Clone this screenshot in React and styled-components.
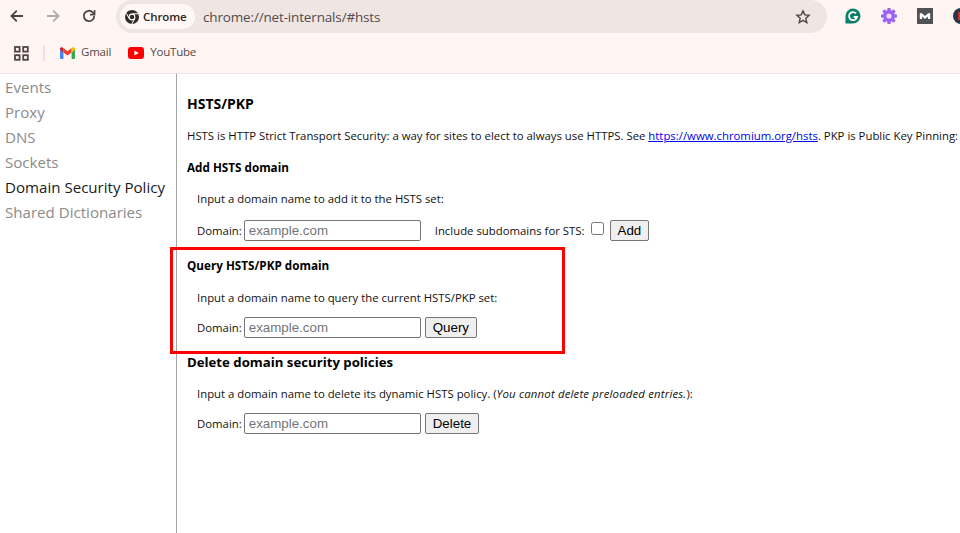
import React from "react";
import styled, { createGlobalStyle } from "styled-components";

const Global = createGlobalStyle`
  html, body { margin: 0; padding: 0; width: 960px; height: 533px; overflow: hidden; background: #fff; }
  #root { width: 960px; height: 533px; overflow: hidden; }
`;
const UI = `"Open Sans", "Noto Sans", sans-serif`;
const Page = styled.div`display:flex;flex-direction:column;width:960px;height:533px;position:relative;overflow:hidden;font-family:${UI};`;
const Chrome = styled.header`height:73px;background:#fff5f3;border-bottom:1px solid #ebe3e1;display:flex;flex-direction:column;flex:none;`;
const Toolbar = styled.div`height:33px;box-sizing:border-box;padding-bottom:1px;display:flex;align-items:center;`;
const NavBtn = styled.div`width:36px;display:flex;justify-content:center;align-items:center;color:${p=>p.$off?"#b3aaa8":"#51443f"};`;
const NavGroup = styled.div`display:flex;margin-left:-1px;width:117px;flex:none;`;
const Omni = styled.div`width:711px;height:33px;flex:none;align-self:flex-start;background:#efe6e4;border-radius:17px;display:flex;align-items:center;padding:0 4px;box-sizing:border-box;`;
const Chip = styled.div`height:25px;width:75px;flex:none;background:#fff8f6;border-radius:13px;display:flex;align-items:center;gap:4px;padding-left:5px;box-sizing:border-box;font-size:11.5px;font-weight:600;color:#2b2523;letter-spacing:-.1px;`;
const Url = styled.span`margin-left:8px;font-size:13.5px;color:#55494a;letter-spacing:-.16px;flex:1;`;
const Star = styled.div`margin-right:12px;display:flex;color:#51443f;`;
const Exts = styled.div`display:flex;align-items:center;flex:1;padding-left:18px;gap:20px;`;
const Ext = styled.div`width:16px;height:16px;flex:none;display:flex;`;
const Bookmarks = styled.div`flex:1;display:flex;align-items:center;padding-left:14px;font-size:11.5px;color:#544947;`;
const Sep = styled.div`width:2px;height:16px;background:#fbdcd8;margin:0 15px 0 14px;`;
const Mark = styled.div`display:flex;align-items:center;gap:6px;margin-right:17px;letter-spacing:-.2px;line-height:14px;`;
const MarkText = styled.span`margin-top:-2px;`;
const Body = styled.div`flex:1;display:flex;min-height:0;`;
const Side = styled.nav`flex:none;border-right:1px solid #a6a6a6;padding:1px 0 0 5px;width:171px;`;
const SideItem = styled.div`height:25px;line-height:25px;font-size:15.1px;color:${p=>p.$on?"#1a1a1a":"#8b8b8b"};white-space:nowrap;`;
const Main = styled.main`flex:1;min-width:0;padding:21px 0 0 10px;overflow:hidden;font-size:11.37px;color:#111;`;
const H1 = styled.h1`margin:0;font-size:14px;line-height:18px;font-weight:700;color:#000;`;
const H2 = styled.h2`margin:${p=>p.$top||"15px"} 0 0;font-size:${p=>p.$big?"13.2px":"11.7px"};line-height:16px;font-weight:700;color:#000;white-space:nowrap;`;
const Para = styled.p`margin:${p=>p.$top||"16px"} 0 0;line-height:16px;white-space:nowrap;`;
const Indent = styled.div`padding-left:10px;`;
const Row = styled.div`display:flex;align-items:center;margin-top:${p=>p.$mt||"10px"};height:22px;white-space:nowrap;`;
const Field = styled.input`width:177px;height:21px;box-sizing:border-box;border:1px solid #767676;border-radius:2px;margin-left:2px;padding:0 4px;font-family:"Liberation Sans",Arial,sans-serif;font-size:13.33px;color:#000;&::placeholder{color:#757575;opacity:1;}`;
const Btn = styled.button`height:21px;box-sizing:border-box;border:1px solid #767676;border-radius:2px;background:#efefef;margin-left:${p=>p.$ml||"4px"};padding:0 7px;font-family:"Liberation Sans",Arial,sans-serif;font-size:13.33px;color:#000;`;
const Label = styled.span`margin-left:14px;`;
const Check = styled.input.attrs({type:"checkbox"})`width:13px;height:13px;margin:0 0 3px 6px;`;
const Link = styled.a`color:#0000ee;text-decoration:underline;`;
const Note = styled.em`letter-spacing:.18px;`;
const Callout = styled.div`position:absolute;left:170px;top:247px;width:395px;height:107px;box-sizing:border-box;border:3px solid #fe0000;pointer-events:none;`;

const Back = ({flip}) => <svg width="16" height="16" viewBox="0 0 16 16" fill="none" stroke="currentColor" strokeWidth="1.8" style={flip?{transform:"scaleX(-1)"}:undefined}><path d="M14 8H2.5M7.8 2.6 2.4 8l5.4 5.4"/></svg>;

export default function App(){
  return <Page>
    <Global/>
    <Chrome>
      <Toolbar>
        <NavGroup>
          <NavBtn><Back/></NavBtn>
          <NavBtn $off><Back flip/></NavBtn>
          <NavBtn><svg width="16" height="16" viewBox="0 0 16 16" fill="none" stroke="currentColor" strokeWidth="1.8"><path d="M13.2 8a5.2 5.2 0 1 1-1.5-3.7L13.4 6"/><path d="M13.6 2v4.6H9" strokeWidth="1.6"/></svg></NavBtn>
        </NavGroup>
        <Omni>
          <Chip>
            <svg width="14" height="14" viewBox="0 0 14 14"><circle cx="7" cy="7" r="7" fill="#2f2b2a"/><circle cx="7" cy="7" r="3.4" fill="#fff"/><circle cx="7" cy="7" r="2.3" fill="#2f2b2a"/><path d="M7 3.8h6M4.2 8.6 1.4 3.4M9.8 8.6 6.8 14" stroke="#fff" strokeWidth="1"/></svg>
            Chrome
          </Chip>
          <Url>chrome://net-internals/#hsts</Url>
          <Star><svg width="16" height="16" viewBox="0 0 16 16" fill="none" stroke="currentColor" strokeWidth="1.4"><path d="M8 1.9l1.8 4 4.3.4-3.3 2.9 1 4.3L8 11.3l-3.8 2.2 1-4.3-3.3-2.9 4.3-.4z"/></svg></Star>
        </Omni>
        <Exts>
          <Ext><svg width="16" height="16" viewBox="0 0 16 16"><path d="M8 .5a7.5 7.5 0 0 1 0 15H.5V8A7.5 7.5 0 0 1 8 .5z" fill="#0c7f69"/><path d="M11 5.4A4 4 0 1 0 12 9H8.6" fill="none" stroke="#fff" strokeWidth="1.8"/></svg></Ext>
          <Ext><svg width="16" height="16" viewBox="0 0 16 16"><g fill="#9a63f2"><circle cx="8" cy="8" r="5.8"/><rect x="6.2" y="0" width="3.6" height="16" rx="1"/><rect x="0" y="6.2" width="16" height="3.6" rx="1"/><rect x="6.2" y="0" width="3.6" height="16" rx="1" transform="rotate(45 8 8)"/><rect x="6.2" y="0" width="3.6" height="16" rx="1" transform="rotate(-45 8 8)"/></g><circle cx="8" cy="8" r="2.6" fill="#e9dcff"/></svg></Ext>
          <Ext><svg width="16" height="16" viewBox="0 0 16 16"><rect width="16" height="16" fill="#4f5355"/><path d="M2.8 11V5.2h2.1L8 8l3.1-2.8h2.1V11h-2.3V8.4L8 11 5.1 8.4V11z" fill="#fff"/></svg></Ext>
          <Ext><svg width="16" height="16" viewBox="0 0 16 16"><circle cx="8" cy="8" r="8" fill="#27374a"/><path d="M6 4v8M6 8h4M10 4v8" stroke="#d8362e" strokeWidth="1.8" fill="none"/></svg></Ext>
        </Exts>
      </Toolbar>
      <Bookmarks>
        <svg width="15" height="15" viewBox="0 0 15 15" fill="none" stroke="#51443f" strokeWidth="1.8"><rect x="1" y="1" width="4.6" height="4.6"/><rect x="9.2" y="1" width="4.6" height="4.6"/><rect x="1" y="9.2" width="4.6" height="4.6"/><rect x="9.2" y="9.2" width="4.6" height="4.6"/></svg>
        <Sep/>
        <Mark>
          <svg width="15" height="12" viewBox="0 0 15 12"><path d="M0 2v9a1 1 0 0 0 1 1h2.4V5.4z" fill="#4285f4"/><path d="M15 2v9a1 1 0 0 1-1 1h-2.4V5.4z" fill="#34a853"/><path d="M11.6 1 7.5 4.2 3.4 1v4.4l4.1 3.1 4.1-3.1z" fill="#ea4335"/><path d="M0 2c0-1.6 2-2.4 3.4-1v4.4L0 2.8z" fill="#c5221f"/><path d="M15 2c0-1.6-2-2.4-3.4-1v4.4L15 2.8z" fill="#fbbc04"/></svg>
          <MarkText>Gmail</MarkText>
        </Mark>
        <Mark>
          <svg width="16" height="12" viewBox="0 0 16 12"><rect width="16" height="12" rx="3" fill="#f00"/><path d="M6.4 3.4v5.2L10.8 6z" fill="#fff"/></svg>
          <MarkText>YouTube</MarkText>
        </Mark>
      </Bookmarks>
    </Chrome>
    <Body>
      <Side>
        <SideItem>Events</SideItem>
        <SideItem>Proxy</SideItem>
        <SideItem>DNS</SideItem>
        <SideItem>Sockets</SideItem>
        <SideItem $on>Domain Security Policy</SideItem>
        <SideItem>Shared Dictionaries</SideItem>
      </Side>
      <Main>
        <H1>HSTS/PKP</H1>
        <Para $top="15px">HSTS is HTTP Strict Transport Security: a way for sites to elect to always use HTTPS. See <Link href="#">https://www.chromium.org/hsts</Link>. PKP is Public Key Pinning:</Para>
        <H2>Add HSTS domain</H2>
        <Indent>
          <Para>Input a domain name to add it to the HSTS set:</Para>
          <Row $mt="12px">Domain:<Field placeholder="example.com"/><Label>Include subdomains for STS:</Label><Check/><Btn $ml="6px">Add</Btn></Row>
        </Indent>
        <H2 $top="16px">Query HSTS/PKP domain</H2>
        <Indent>
          <Para $top="17px">Input a domain name to query the current HSTS/PKP set:</Para>
          <Row>Domain:<Field placeholder="example.com"/><Btn>Query</Btn></Row>
        </Indent>
        <H2 $big $top="16px">Delete domain security policies</H2>
        <Indent>
          <Para>Input a domain name to delete its dynamic HSTS policy. (<Note>You cannot delete preloaded entries.</Note>):</Para>
          <Row $mt="10px">Domain:<Field placeholder="example.com"/><Btn>Delete</Btn></Row>
        </Indent>
      </Main>
    </Body>
    <Callout/>
  </Page>;
}
